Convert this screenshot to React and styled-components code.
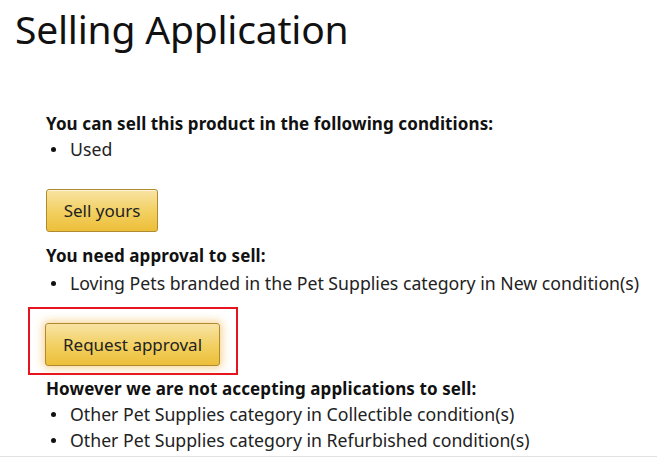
import React from 'react'
import styled, { createGlobalStyle } from 'styled-components'

const GlobalStyle = createGlobalStyle`
  html, body {
    margin: 0;
    padding: 0;
    background: #ffffff;
  }
  body {
    font-family: "Noto Sans", "Open Sans", Arial, sans-serif;
    color: #111111;
  }
`

const Page = styled.div`
  width: 657px;
  height: 467px;
  overflow: hidden;
  position: relative;
  display: flex;
  flex-direction: column;
`

const Title = styled.h1`
  margin: 5px 0 0 15px;
  font-size: 39px;
  font-weight: 400;
  line-height: 47px;
  color: #111111;
  letter-spacing: -0.2px;
`

const Content = styled.div`
  margin: 61px 0 0 46px;
  display: flex;
  flex-direction: column;
  align-items: flex-start;
`

const Heading = styled.div`
  margin-top: ${p => p.$top || 0}px;
  font-size: 17px;
  font-weight: 700;
  line-height: 22px;
  color: #111111;
  letter-spacing: 0.1px;
`

const List = styled.ul`
  margin: ${p => p.$top || 0}px 0 0 0;
  padding: 0;
  list-style: none;
`

const Item = styled.li`
  font-size: 17.7px;
  line-height: 26px;
  color: #222222;
  display: flex;
  align-items: center;

  &::before {
    content: "";
    width: 5px;
    height: 5px;
    border-radius: 50%;
    background: #111111;
    margin: 0 14px 0 5px;
  }
`

const Highlight = styled.div`
  margin: ${p => p.$top || 0}px 0 0 -18px;
  padding: 14px 16px 7px 15px;
  border: 2px solid #e5141e;
`

const Button = styled.button`
  display: block;
  margin-top: ${p => p.$top || 0}px;
  width: ${p => p.$w}px;
  height: 43px;
  padding: 0;
  border: 1px solid #b08a2e;
  border-radius: 3px;
  background: linear-gradient(to bottom, #f8e3a4 0%, #f2cf5f 55%, #edbf3a 100%);
  box-shadow: ${p => (p.$glow ? '0 0 8px 2px rgba(240, 176, 60, 0.55)' : '0 1px 0 rgba(255,255,255,0.6) inset')};
  font-family: "Noto Sans", "Open Sans", Arial, sans-serif;
  font-size: 17px;
  color: #222222;
  cursor: pointer;
`

const Rule = styled.div`
  position: absolute;
  left: 0;
  right: 0;
  top: 456px;
  height: 1px;
  background: #e2e2e2;
`

export default function App() {
  return (
    <Page>
      <GlobalStyle />
      <Title>Selling Application</Title>
      <Content>
        <Heading>You can sell this product in the following conditions:</Heading>
        <List $top={1}>
          <Item>Used</Item>
        </List>
        <Button $top={27} $w={112}>Sell yours</Button>
        <Heading $top={13}>You need approval to sell:</Heading>
        <List $top={3}>
          <Item>Loving Pets branded in the Pet Supplies category in New condition(s)</Item>
        </List>
        <Highlight $top={11}>
          <Button $w={175} $glow>Request approval</Button>
        </Highlight>
        <Heading $top={3}>However we are not accepting applications to sell:</Heading>
        <List $top={1}>
          <Item>Other Pet Supplies category in Collectible condition(s)</Item>
          <Item>Other Pet Supplies category in Refurbished condition(s)</Item>
        </List>
      </Content>
      <Rule />
    </Page>
  )
}
